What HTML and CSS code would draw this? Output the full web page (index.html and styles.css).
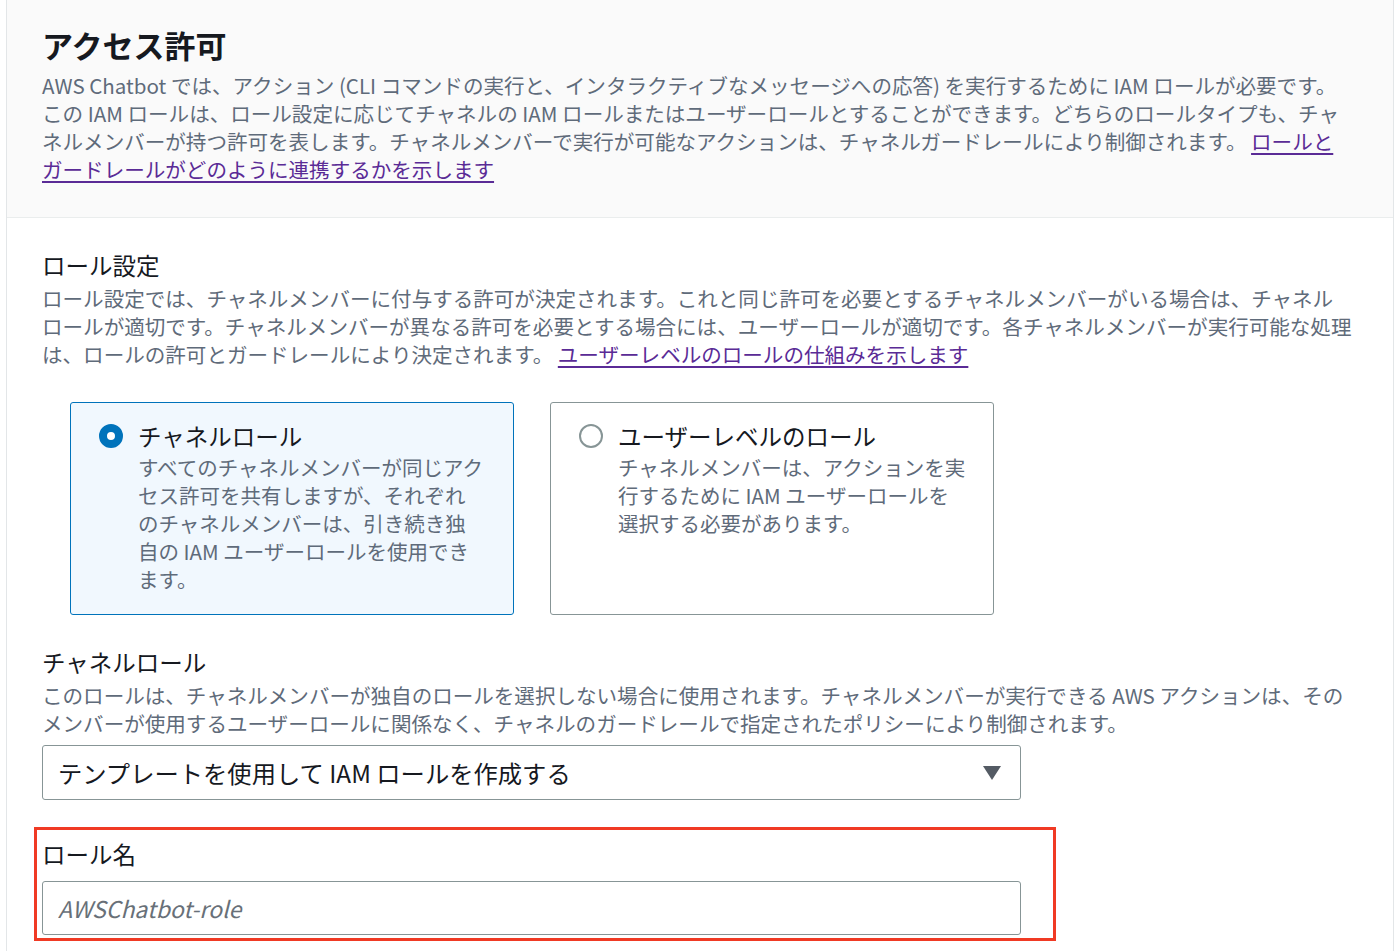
FILE: index.html
```html
<!DOCTYPE html>
<html lang="ja">
<head>
<meta charset="UTF-8">
<title>アクセス許可</title>
<link rel="stylesheet" href="styles.css">
</head>
<body>
<div class="panel">
  <div class="panel-header">
    <h2>アクセス許可</h2>
    <p class="desc">AWS Chatbot では、アクション (CLI コマンドの実行と、インタラクティブなメッセージへの応答) を実行するために IAM ロールが必要です。<br>この IAM ロールは、ロール設定に応じてチャネルの IAM ロールまたはユーザーロールとすることができます。どちらのロールタイプも、チャ<br>ネルメンバーが持つ許可を表します。チャネルメンバーで実行が可能なアクションは、チャネルガードレールにより制御されます。 <a href="#">ロールと<br>ガードレールがどのように連携するかを示します</a></p>
  </div>

  <div class="panel-body">
    <div class="field">
      <div class="label">ロール設定</div>
      <p class="desc">ロール設定では、チャネルメンバーに付与する許可が決定されます。これと同じ許可を必要とするチャネルメンバーがいる場合は、チャネル<br>ロールが適切です。チャネルメンバーが異なる許可を必要とする場合には、ユーザーロールが適切です。各チャネルメンバーが実行可能な処理<br>は、ロールの許可とガードレールにより決定されます。 <a href="#">ユーザーレベルのロールの仕組みを示します</a></p>

      <div class="tiles">
        <label class="tile selected">
          <span class="radio"></span>
          <span class="tile-text">
            <span class="tile-title">チャネルロール</span>
            <span class="tile-desc">すべてのチャネルメンバーが同じアク<br>セス許可を共有しますが、それぞれ<br>のチャネルメンバーは、引き続き独<br>自の IAM ユーザーロールを使用でき<br>ます。</span>
          </span>
        </label>
        <label class="tile">
          <span class="radio"></span>
          <span class="tile-text">
            <span class="tile-title">ユーザーレベルのロール</span>
            <span class="tile-desc">チャネルメンバーは、アクションを実<br>行するために IAM ユーザーロールを<br>選択する必要があります。</span>
          </span>
        </label>
      </div>
    </div>

    <div class="field">
      <div class="label">チャネルロール</div>
      <p class="desc">このロールは、チャネルメンバーが独自のロールを選択しない場合に使用されます。チャネルメンバーが実行できる AWS アクションは、その<br>メンバーが使用するユーザーロールに関係なく、チャネルのガードレールで指定されたポリシーにより制御されます。</p>
      <div class="select">
        <span>テンプレートを使用して IAM ロールを作成する</span>
        <svg width="18" height="14" viewBox="0 0 18 14"><path d="M0 0h18L9 14z" fill="#545b64"/></svg>
      </div>
    </div>

    <div class="highlight">
      <div class="label">ロール名</div>
      <input class="input" type="text" placeholder="AWSChatbot-role">
    </div>
  </div>
</div>
</body>
</html>
```

FILE: styles.css
```css
html {
	font-family: "Noto Sans CJK JP", "Noto Sans", sans-serif;
	color: #16191f;
}
body {
	margin: 0;
	background: #fff;
}
.panel {
	margin: 0 6px;
	min-height: 951px;
	border-left: 1px solid #e3e6e8;
	border-right: 1px solid #e3e6e8;
}
.panel-header {
	background: #fafafa;
	border-bottom: 1px solid #eaeded;
	padding: 27px 35px 34px;
}
h2 {
	margin: 0 0 8px;
	font-size: 31px;
	line-height: 36px;
	font-weight: 700;
}
.desc {
	margin: 0;
	font-size: 20.55px;
	line-height: 28px;
	color: #5f6b7a;
	white-space: nowrap;
}
a {
	color: #5a2b96;
	text-decoration: underline;
	text-underline-offset: 3px;
}
.panel-body {
	padding: 31px 35px 0;
}
.field {
	margin-bottom: 31px;
}
.label {
	font-size: 23.5px;
	line-height: 32px;
	margin-bottom: 3px;
}

/* radio tiles */
.tiles {
	display: flex;
	gap: 36px;
	margin: 34px 0 0 28px;
}
.tile {
	display: flex;
	width: 444px;
	box-sizing: border-box;
	min-height: 212px;
	padding: 17px 20px 21px 28px;
	border: 1px solid #879596;
	border-radius: 3px;
	gap: 15px;
}
.tile.selected {
	background: #f1f8fe;
	border-color: #0073bb;
}
.radio {
	flex: none;
	width: 24px;
	height: 24px;
	margin-top: 4px;
	box-sizing: border-box;
	border: 2px solid #879596;
	border-radius: 50%;
}
.tile.selected .radio {
	border: 8px solid #0073bb;
	background: #fff;
}
.tile-text {
	display: flex;
	flex-direction: column;
}
.tile-title {
	font-size: 23.5px;
	line-height: 32px;
	margin-bottom: 1px;
}
.tile-desc {
	font-size: 20.5px;
	line-height: 28px;
	color: #5f6b7a;
	white-space: nowrap;
}

/* select + input */
.select {
	display: flex;
	align-items: center;
	justify-content: space-between;
	width: 979px;
	height: 55px;
	box-sizing: border-box;
	margin-top: 8px;
	padding: 0 19px 0 15px;
	border: 1px solid #879596;
	border-radius: 3px;
	font-size: 24.3px;
}
.highlight {
	width: 1022px;
	box-sizing: border-box;
	margin: -4px 0 0 -8px;
	padding: 8px 32px 3px 5px;
	border: 3px solid #f03a24;
}
.highlight .label {
	margin-bottom: 11px;
}
.input {
	display: block;
	width: 979px;
	height: 54px;
	box-sizing: border-box;
	padding: 0 15px;
	border: 1px solid #879596;
	border-radius: 3px;
	font-family: inherit;
	font-size: 23px;
	color: #16191f;
}
.input::placeholder {
	color: #687078;
	font-style: italic;
}
```
